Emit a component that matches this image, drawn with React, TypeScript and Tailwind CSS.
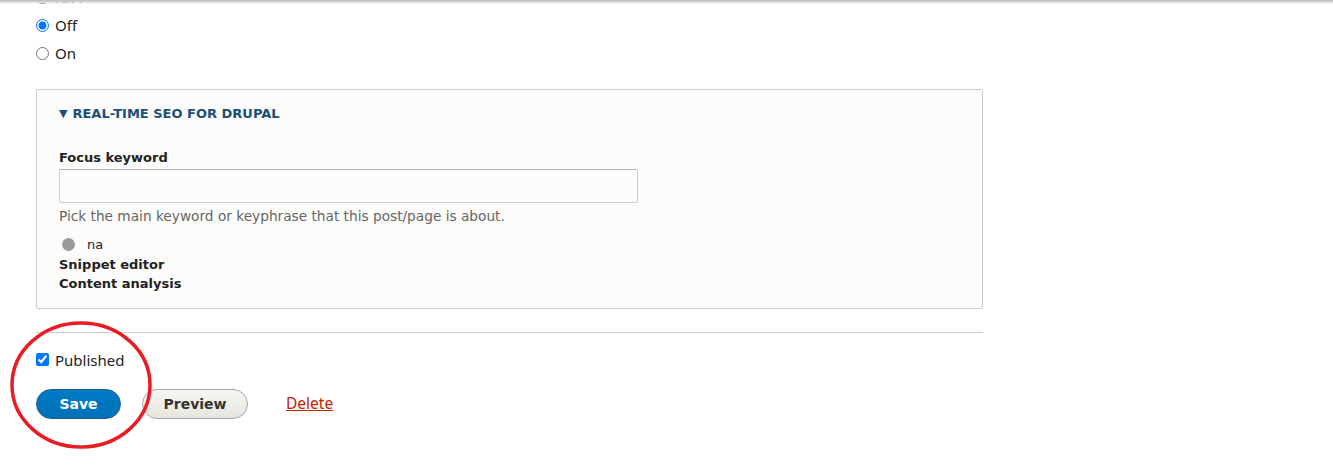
import { useState } from "react"

const seven = "font-['Lucida_Grande','DejaVu_Sans',Verdana,sans-serif]"

function RadioRow({ label, checked }: { label: string; checked?: boolean }) {
  return (
    <label className="flex h-[28px] items-center gap-[6px] font-['Noto_Sans',sans-serif] text-[15px] text-[#222]">
      <input type="radio" name="status" defaultChecked={checked} className="m-0 h-[13px] w-[13px]" />
      <span>{label}</span>
    </label>
  )
}

function SeoFieldset() {
  return (
    <fieldset className={`rounded-[2px] border border-[#ccc] bg-[#fcfcfa] pt-[15px] pb-[15px] pl-[22px] ${seven}`}>
      <div className="flex h-[18px] items-center gap-[5px] text-[13px] font-bold uppercase text-[#1a4f78]">
        <span className="text-[11px]">▼</span>
        <span>Real-time SEO for Drupal</span>
      </div>
      <div className="mt-[25px] text-[13px] font-bold text-[#222]">Focus keyword</div>
      <input
        type="text"
        className="mt-[1px] block h-[34px] w-[579px] rounded-[2px] border border-[#ccc] border-t-[#b4b4b4] bg-[#fcfcfa]"
      />
      <div className="mt-[4px] text-[13.7px] leading-[18px] text-[#666]">
        Pick the main keyword or keyphrase that this post/page is about.
      </div>
      <div className="mt-[10px] flex h-[20px] items-center text-[13px] text-[#222]">
        <span className="ml-[3px] h-[13px] w-[13px] rounded-full bg-[#999]" />
        <span className="ml-[12px]">na</span>
      </div>
      <div className="text-[13px] font-bold leading-[19px] text-[#222]">Snippet editor</div>
      <div className="text-[13px] font-bold leading-[19px] text-[#222]">Content analysis</div>
    </fieldset>
  )
}

export default function App() {
  const [published, setPublished] = useState(true)

  return (
    <div className="relative h-[471px] w-[1333px] overflow-hidden bg-white">
      <div className="absolute inset-x-0 top-0 z-10 h-[4px] bg-gradient-to-b from-[#b8b8b8] via-[#dcdcdc] to-transparent" />
      <div className="box-content w-[947px] pl-[36px]">
        <div className="-mt-[17px]">
          <RadioRow label="N/A" />
          <RadioRow label="Off" checked />
          <RadioRow label="On" />
        </div>
        <div className="mt-[22px]">
          <SeoFieldset />
        </div>
        <div className="mt-[23px] h-px bg-[#ccc]" />
        <label className="mt-[16px] flex items-center gap-[6px] font-['Noto_Sans',sans-serif] text-[15px] text-[#222]">
          <input
            type="checkbox"
            checked={published}
            onChange={() => setPublished(!published)}
            className="m-0 h-[13px] w-[13px]"
          />
          <span>Published</span>
        </label>
        <div className={`mt-[18px] flex items-center ${seven}`}>
          <button
            type="button"
            className="h-[30px] w-[85px] rounded-[20px] border border-[#1e5c90] bg-gradient-to-b from-[#007bc6] to-[#0071b8] text-[14px] font-bold text-white"
          >
            Save
          </button>
          <button
            type="button"
            className="ml-[21px] h-[30px] w-[106px] rounded-[20px] border border-[#a6a6a6] bg-gradient-to-b from-[#f6f6f3] to-[#e7e7df] text-[14px] font-bold text-[#333]"
          >
            Preview
          </button>
          <a href="#" className="ml-[38px] font-['Noto_Sans',sans-serif] text-[15.5px] text-[#c72100] underline">
            Delete
          </a>
        </div>
      </div>
      <svg className="pointer-events-none absolute left-[8px] top-[320px]" width="146" height="132" viewBox="0 0 146 132">
        <ellipse cx="73" cy="65" rx="69" ry="62" fill="none" stroke="#ea1b23" strokeWidth="3.5" />
      </svg>
    </div>
  )
}
